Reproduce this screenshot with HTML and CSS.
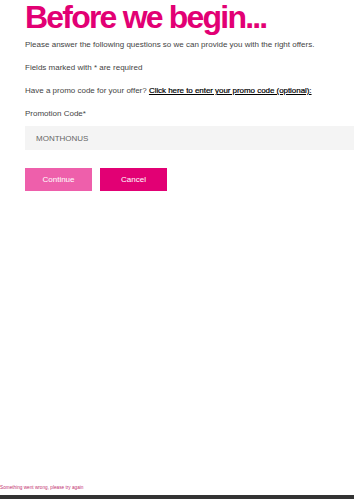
FILE: index.html
```html
<!DOCTYPE html>
<html lang="en">
<head>
<meta charset="utf-8">
<title>Before we begin</title>
<link rel="stylesheet" href="styles.css">
</head>
<body>
<div class="page">
  <main class="content">
    <h1 class="title">Before we begin...</h1>
    <p class="text intro">Please answer the following questions so we can provide you with the right offers.</p>
    <p class="text">Fields marked with * are required</p>
    <p class="text">Have a promo code for your offer? <a class="link" href="#">Click here to enter your promo code (optional):</a></p>
    <label class="text label" for="promo">Promotion Code*</label>
    <div class="field"><input id="promo" class="input" type="text" value="MONTHONUS"></div>
    <div class="actions">
      <button class="btn btn-continue" type="button">Continue</button>
      <button class="btn btn-cancel" type="button">Cancel</button>
    </div>
  </main>
  <div class="error">Something went wrong, please try again</div>
  <div class="bottombar"></div>
</div>
</body>
</html>
```
FILE: styles.css
```css
html, body {
  margin: 0;
  padding: 0;
  background: #ffffff;
  overflow: hidden;
}
.page {
  display: flex;
  flex-direction: column;
  height: 100vh;
  font-family: "Liberation Sans", Arial, sans-serif;
}
.content {
  padding-left: 25px;
  flex: 1;
}
.title {
  margin: 0 0 6px 0;
  font-size: 32px;
  line-height: 34px;
  font-weight: 700;
  letter-spacing: -1.8px;
  color: #e20074;
}
.text {
  display: block;
  margin: 0 0 13px 0;
  font-size: 8px;
  line-height: 10px;
  color: #444444;
}
.link {
  color: #000000;
  text-decoration: underline;
  font-weight: 400;
  letter-spacing: -0.05px;
  -webkit-text-stroke: 0.2px #000000;
}
.label {
  margin-bottom: 7px;
}
.field {
  margin-bottom: 18px;
}
.input {
  display: block;
  box-sizing: border-box;
  width: 329px;
  height: 24px;
  border: none;
  background: #f4f4f4;
  padding: 0 0 0 11px;
  font-family: "Liberation Sans", Arial, sans-serif;
  font-size: 8px;
  color: #666666;
  outline: none;
}
.actions {
  display: flex;
  gap: 8px;
}
.btn {
  width: 67px;
  height: 23px;
  border: none;
  padding: 0;
  font-family: "Liberation Sans", Arial, sans-serif;
  font-size: 8px;
  color: #ffffff;
}
.btn-continue {
  background: #ee5fab;
}
.btn-cancel {
  background: #e20074;
}
.error {
  font-size: 4.7px;
  line-height: 8px;
  color: #c2306f;
  margin-bottom: 3px;
}
.bottombar {
  height: 4px;
  background: #333333;
}
```
